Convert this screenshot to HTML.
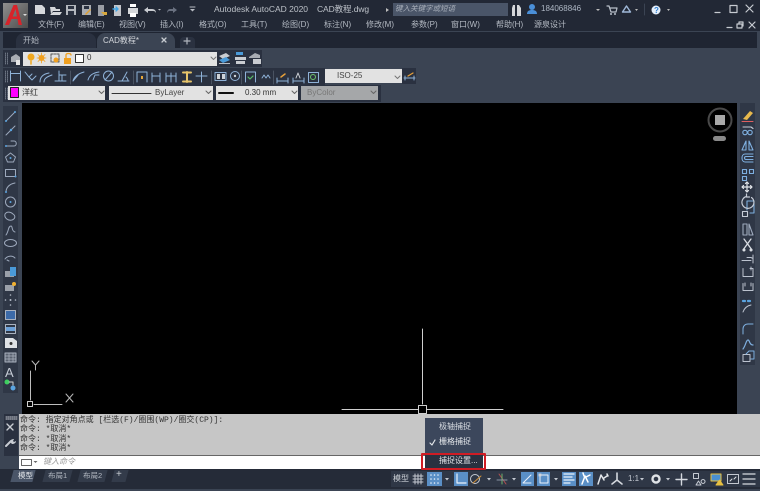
<!DOCTYPE html>
<html><head><meta charset="utf-8"><style>
html,body{margin:0;padding:0;background:#3b4453;width:760px;height:491px;overflow:hidden}
#r{position:relative;width:760px;height:491px;overflow:hidden;font-family:"Liberation Sans","Noto Sans CJK SC",sans-serif;filter:blur(.35px)}
.b{position:absolute}
.t{position:absolute;white-space:nowrap;font-size:8px;line-height:12px;color:#b4bac3}
.c{position:absolute;background:#e2e2e2;color:#444}
.m{font-family:"Liberation Mono","Noto Sans CJK SC",monospace;font-size:8px;color:#333;position:absolute;white-space:nowrap;line-height:10px}
svg{position:absolute;left:0;top:0}
</style></head><body><div id="r">
<div class="b" style="left:0;top:0;width:760px;height:32px;background:#222835"></div>
<div class="b" style="left:0;top:31px;width:760px;height:1px;background:#3b4453"></div>
<div class="b" style="left:3px;top:32px;width:754px;height:16px;background:#1f2532"></div>
<div class="b" style="left:16px;top:33px;width:80px;height:15px;background:#2a3140;border-radius:8px 8px 0 0"></div>
<div class="b" style="left:97px;top:33px;width:78px;height:15px;background:#3b4453;border-radius:8px 8px 0 0"></div>
<div class="b" style="left:180px;top:37px;width:15px;height:11px;background:#2a3140;border-radius:4px 4px 0 0"></div>
<div class="b" style="left:3px;top:3px;width:25px;height:25px;background:linear-gradient(135deg,#8f8f8f,#4c4c4c)"></div>

<div class="b" style="left:3px;top:50px;width:259px;height:17px;background:#2a3140"></div>
<div class="b" style="left:3px;top:68px;width:322px;height:17px;background:#2a3140"></div>
<div class="b" style="left:402px;top:68px;width:14px;height:16px;background:#2a3140"></div>
<div class="b" style="left:3px;top:85px;width:378px;height:17px;background:#2a3140"></div>

<div class="b" style="left:22px;top:103px;width:715px;height:311px;background:#000"></div>
<div class="b" style="left:3px;top:106px;width:15px;height:287px;background:#2f3746"></div>
<div class="b" style="left:740px;top:103px;width:15px;height:262px;background:#2f3746"></div>

<div class="b" style="left:4px;top:414px;width:14px;height:42px;background:#2a3140"></div>
<div class="b" style="left:19px;top:414px;width:741px;height:41px;background:#c6c6c6"></div>
<div class="b" style="left:19px;top:455px;width:741px;height:1px;background:#666"></div>
<div class="b" style="left:19px;top:456px;width:741px;height:13px;background:#fff"></div>
<div class="b" style="left:0;top:469px;width:760px;height:20px;background:#252b38"></div>
<div class="b" style="left:0;top:489px;width:760px;height:2px;background:#3b4453"></div>
<div class="b" style="left:12px;top:470px;width:22px;height:12px;background:#4a5568;transform:skewX(-15deg)"></div>
<div class="b" style="left:44px;top:470px;width:27px;height:12px;background:#333b4a;transform:skewX(-15deg)"></div>
<div class="b" style="left:79px;top:470px;width:27px;height:12px;background:#333b4a;transform:skewX(-15deg)"></div>
<div class="b" style="left:113px;top:470px;width:14px;height:12px;background:#333b4a;transform:skewX(-15deg)"></div>
<div class="b" style="left:391px;top:471px;width:369px;height:16px;background:#2f3746"></div>

<div class="b" style="left:393px;top:3px;width:115px;height:13px;background:#4a5568"></div>

<div class="c" style="left:23px;top:52px;width:194px;height:14px"></div>
<div class="c" style="left:325px;top:69px;width:77px;height:14px"></div>
<div class="c" style="left:8px;top:86px;width:97px;height:14px"></div>
<div class="c" style="left:109px;top:86px;width:104px;height:14px"></div>
<div class="c" style="left:216px;top:86px;width:82px;height:14px"></div>
<div class="c" style="left:301px;top:86px;width:77px;height:14px;background:#a5a7a9"></div>

<div class="b" style="left:427px;top:472px;width:15px;height:14px;background:#5a8fc6"></div>
<div class="b" style="left:454px;top:472px;width:14px;height:14px;background:#5a8fc6"></div>
<div class="b" style="left:521px;top:472px;width:13px;height:14px;background:#5a8fc6"></div>
<div class="b" style="left:537px;top:472px;width:13px;height:14px;background:#5a8fc6"></div>
<div class="b" style="left:562px;top:472px;width:14px;height:14px;background:#5a8fc6"></div>
<div class="b" style="left:579px;top:472px;width:14px;height:14px;background:#5a8fc6"></div>

<svg width="760" height="491" viewBox="0 0 760 491" fill="none" stroke-linecap="round" stroke-linejoin="round">
<!-- logo -->
<path d="M5 25 L13.500 5 H17 L22 25 H18.500 L17.500 19 H11.500 L9 25Z M12.700 16.500 H17 L15.500 9Z" fill="#d8232a" fill-rule="evenodd"/>
<path d="M23 14h4l-2 2z" fill="#ddd"/>
<!-- quick access -->
<g fill="#d5d7da">
<path d="M35 5h7l3 3v6H35z"/>
<path d="M50 7h5l1 2h4v2h-7l-2 3zM53 12h9l-2 3H50z"/>
<path d="M66 5h10v10H66z" fill="#b3b7bd"/><path d="M68 6h6v3h-6zM68 11h6v4h-6z" fill="#2a3140"/>
<path d="M82 5h9v10H82z" fill="#a9adb3"/><path d="M84 6h5v3h-5z" fill="#2a3140"/>
<path d="M98 5h6v11h-6z" fill="#9a9ea5"/>
<path d="M114 5h7v11h-7z" fill="#c3c6cb"/>
<path d="M128 8h10v6h-10z"/><path d="M130 4h6v3h-6zM130 13h6v4h-6z" fill="#fff"/>
</g>
<path d="M85 14l5-5 1 1-5 5z" fill="#e0a030"/>
<path d="M101 12l3 3h3v-3z" fill="#d9a93c"/>
<path d="M113 9h5m-2-2l2 2-2 2" stroke="#3ea4e6" stroke-width="1.400"/>
<path d="M144 10l4-3v2h4c3 0 4 2 4 4-1-2-2-2-4-2h-4v2z" fill="#c9ccd1"/>
<path d="M177 10l-4-3v2h-3c-2 0-3 2-3 4 1-2 2-2 3-2h3v2z" fill="#6a7180"/>
<path d="M158 9h3l-1.500 1.500zM190 9h5l-2.500 2.500z" fill="#b8bcc3"/><path d="M190 7h5" stroke="#b8bcc3"/>
<path d="M386 8v4l3-2z" fill="#bbb"/>
<!-- right title icons -->
<path d="M512 8l1-3h2v11h-3zM517 5h2l2 3v8h-4z" fill="#d5d7da"/>
<circle cx="532" cy="7" r="3" fill="#4a8fd8"/><path d="M527 14c0-3 2-4 5-4s5 1 5 4z" fill="#4a8fd8"/>
<path d="M596 9h4l-2 2z" fill="#bbb"/>
<path d="M607 6h2l2 6h5l1-4h-7" stroke="#b9c0ca" stroke-width="1.200"/><circle cx="611" cy="14" r="1" fill="#b9c0ca"/><circle cx="615" cy="14" r="1" fill="#b9c0ca"/>
<path d="M626.500 6l-4 6h8z" stroke="#9fb8d8" stroke-width="1.400"/>
<path d="M635 9h3l-1.500 2z" fill="#bbb"/>
<path d="M644.500 4v11" stroke="#3b4453"/>
<circle cx="656" cy="10" r="4.500" fill="#e4eefa"/>
<text x="654" y="13" font-family="Liberation Sans" font-size="8" font-weight="700" fill="#2f7fd0">?</text>
<path d="M667 9h3l-1.500 2z" fill="#bbb"/>
<g stroke="#c7cbd1" stroke-width="1.200">
<path d="M715 12.500h5"/><path d="M730 5.500h7v7h-7z"/><path d="M746 5l7 7m0-7l-7 7"/>
<path d="M727 27.500h5"/><path d="M737 24h5v4h-5zM739 24v-2h4v4h-1"/><path d="M749 22l6 6m0-6l-6 6"/>
<path d="M162 38l4 4m0-4l-4 4" stroke-width="1.300"/>
<path d="M184 41h6m-3-3v6" stroke="#b0b5bd"/>
</g>
<!-- toolbar row 1 -->
<path d="M5.500 53v11M7.500 53v11M5.500 71v11M7.500 71v11M5.500 88v11M7.500 88v11" stroke="#6c7482" stroke-width="1" stroke-dasharray="1 1"/>
<path d="M11 57l5-3 4 3v5H11z" fill="#a8acb3"/><path d="M16 60h4v5h-4z" fill="#e6e6e6"/>
<circle cx="31" cy="57" r="3.500" fill="#f0a820"/><path d="M31 61v3" stroke="#f0a820" stroke-width="1.500"/>
<circle cx="41.500" cy="58" r="3" fill="#f0a020"/><path d="M41.500 53v10M37 58h9M38 54.500l7 7m0-7l-7 7" stroke="#f0a020" stroke-width=".8"/>
<path d="M51 54h8v8h-8z" stroke="#555" stroke-dasharray="2 1"/><circle cx="56" cy="60" r="2.500" fill="#f0a020"/>
<path d="M64 58h7v6h-7z" fill="#f0a020"/><path d="M66 58v-3c0-2 5-2 5 0" stroke="#f0a020" stroke-width="1.300"/>
<path d="M75.500 54.500h8v8h-8z" fill="#fff" stroke="#333"/>
<path d="M211 57l2.500 2.500L216 57" stroke="#777"/>
<g fill="#c9ccd1"><path d="M219 56l7-3 4 3-7 3z"/><path d="M219 60l7-3 4 3-7 3z" fill="#4a9ad8"/><path d="M219 63h11v1h-11z" fill="#b8bcc3"/>
<path d="M235 57h11v3h-11zM236 61h9v3h-9z"/><path d="M236 52h7v3h-7z" fill="#4a9ad8"/>
<path d="M249 57l6-4 5 2v3h-11z" fill="#a8acb3"/><path d="M253 59h8v5h-8z"/></g>
<!-- dim toolbar -->
<g stroke="#8fb2d8" stroke-width="1">
<path d="M10.500 71v10M20.500 71v10M10.500 73.500h10"/>
<path d="M25 72l4 5 3 3 4-4M29 77l3-3"/>
<path d="M40 82c0-5 3-8 9-9M44 82c0-3 2-5 8-7"/>
<path d="M55 81h11M59 71v10M59 75h7M62 75v6"/>
<path d="M73 81c1-4 4-7 11-9M73 81l5-6"/>
<path d="M88 80c1-4 4-7 11-8M93 80l2-5 4 0"/>
<circle cx="108.500" cy="76" r="5"/><path d="M105 80l7-8"/>
<path d="M118 81h11M122 81l5-9M126 77c1 1 2 3 2 4"/>
<path d="M137 72v10M147 72v10M137 72h10"/>
<path d="M152 73v9M160 73v9M152 76h8"/>
<path d="M166 73v9M171 73v9M176 73v9M166 76h10"/>
<path d="M196 76h11M201.500 72v10"/>
<path d="M215 72.500h11v8h-11z"/>
<circle cx="235" cy="76" r="4.500"/>
<path d="M245.500 72v10M255.500 72v10M245.500 72h10"/>
<path d="M262 78l2-3 2 3 2-3 2 3"/>
<path d="M277 81h11M277 78v5M288 78v5"/>
<path d="M293 81h11M293 78v5M304 78v5"/>
<path d="M308.500 72.500h10v10h-10z"/>
<path d="M404 78h11M405 76v4M414 76v4"/>
</g>
<path d="M70.500 71v13M133.500 71v13M211.500 71v13M241.500 71v13M273.500 71v13" stroke="#4a5362"/>
<path d="M183 72.500h8M183 81.500h8M187 72v10" stroke="#e6c46a" stroke-width="2"/>
<path d="M141 76h2v3h-2z" fill="#e6a83a"/>
<path d="M217 74h3v5h-3zM222 74h3v5h-3z" fill="#cfd3d8"/>
<circle cx="235" cy="76" r="1.200" fill="#cfd3d8"/>
<path d="M248 77l2 2 3-3" stroke="#5bbf6a" stroke-width="1.200"/>
<path d="M281 77l4-3" stroke="#e6a03a" stroke-width="1.500"/>
<path d="M296 78l2-5 2 5" stroke="#cfd3d8"/>
<circle cx="313" cy="77" r="2.500" stroke="#6cc26c"/>
<path d="M408 76l5-3" stroke="#e6a03a" stroke-width="1.300"/>
<path d="M395 76l2.500 2.500L400 76" stroke="#777"/>
<!-- row3 -->
<rect x="10.500" y="87.500" width="8" height="10" fill="#ff00ff" stroke="#222"/>
<path d="M99 91l2.500 2.500L104 91M206 91l2.500 2.500L211 91M292 91l2.500 2.500L297 91M371 91l2.500 2.500L376 91" stroke="#666"/>
<path d="M112 93.500h39" stroke="#333"/>
<path d="M219 93h14" stroke="#111" stroke-width="2"/>
<!-- left toolbar icons -->
<g stroke="#9da9bc" stroke-width="1">
<path d="M6 121l9-9"/><path d="M6 135l9-9"/><path d="M6 146h8c3 0 3-5 0-5h-3"/>
<path d="M10.500 153l5 4-2 5H7.500l-2-5z"/><path d="M5.500 169.500h10v7h-10z"/>
<path d="M6 192c0-4 3-8 9-9"/><circle cx="10.500" cy="202" r="5"/>
<path d="M5 214c2-3 6-2 8 0 3 2 2 5-1 6-4 1-8-2-7-6z"/>
<path d="M6 235c3-4 2-9 5-9 2 0 0 5 4 6"/>
<ellipse cx="10.500" cy="243" rx="6" ry="3.500"/>
<path d="M5 259c2-3 7-4 10-1M7 260l2 1"/>
</g>
<g fill="#5ba4e0"><circle cx="6" cy="121" r="1"/><circle cx="15" cy="112" r="1"/><circle cx="11" cy="130" r="1.200"/><circle cx="6" cy="146" r="1"/><circle cx="10.500" cy="158" r="1"/><circle cx="15.500" cy="176.500" r="1"/><circle cx="6" cy="192" r="1"/><circle cx="10.500" cy="202" r="1"/></g>
<path d="M5 271h9v6H5z" fill="#9aa0a9"/><path d="M10 267h6v9h-6z" fill="#4a9ad8"/>
<path d="M5 285h9v6H5z" fill="#9aa0a9"/><circle cx="14" cy="284" r="2" fill="#f0b030"/>
<circle cx="10.500" cy="300" r="1" fill="#b5bdc9"/><circle cx="5.500" cy="300" r=".8" fill="#b5bdc9"/><circle cx="15.500" cy="300" r=".8" fill="#b5bdc9"/><circle cx="10.500" cy="295" r=".8" fill="#b5bdc9"/><circle cx="10.500" cy="305" r=".8" fill="#b5bdc9"/>
<path d="M5.500 310.500h10v9h-10z" fill="#3c6aa8" stroke="#aab2bf"/><path d="M5.500 324.500h10v9h-10z" stroke="#aab2bf"/><path d="M6 327h9v4H6z" fill="#6da1d8"/>
<path d="M5 338h8l4 3v7H5z" fill="#dfe2e6"/><circle cx="11" cy="343.500" r="1.500" fill="#333"/>
<path d="M5 353h11v9H5z" stroke="#aab2bf" fill="#5a6270"/><path d="M5 356h11M5 359h11M9 353v9M13 353v9" stroke="#aab2bf" stroke-width=".7"/>
<circle cx="7" cy="382" r="2.500" fill="#3ecf60"/><circle cx="13" cy="388" r="2.500" fill="#5ba4e0"/><path d="M9 382h4v3" stroke="#ccc"/>
<!-- right toolbar icons -->
<path d="M743 119l7-8 3 2-6 7z" fill="#e7b84c"/><path d="M742 121.500h11" stroke="#e06060"/>
<g stroke="#7fb0e0" stroke-width="1.100">
<circle cx="745" cy="132.500" r="2.200"/><circle cx="750" cy="132.500" r="2.200"/><path d="M743 127h8l2 1.500" stroke="#c6ccd6"/>
<path d="M746 150v-9l-4 9zM749 150v-9l4 9z"/>
<path d="M753 154h-8c-4 0-4 8 0 8h8M753 156.500h-7c-2 0-2 3 0 3h7"/>
<path d="M742.500 169.500h4v4h-4zM749.500 169.500h4v4h-4zM742.500 176.500h4v4h-4z"/>
<path d="M747 210v-9h7v12h-4"/><path d="M742.500 213.500h5v5h-5z" stroke="#c6ccd6" transform="translate(0,-2)"/>
<path d="M743 224h4v11h-4zM749 224l4 11h-4z" stroke="#9da9bc"/>
</g>
<path d="M747 182v10M742 187h10M745.500 183.500l1.500-1.500 1.500 1.500M745.500 190.500l1.500 1.500 1.500-1.500M743.500 185.500l-1.500 1.500 1.500 1.500M750.500 185.500l1.500 1.500-1.500 1.500" stroke="#e2e5e9" stroke-width="1.200"/>
<path d="M751.500 197.500a6 6 0 1 1-5-1M746.500 194v3h3" stroke="#c6ccd6" stroke-width="1.200"/>
<path d="M744 239l8 11M751 239l-8 11" stroke="#d8dce2" stroke-width="1.300"/><circle cx="744" cy="250" r="1.500" fill="#d8dce2"/><circle cx="751" cy="250" r="1.500" fill="#d8dce2"/>
<g stroke="#bcc3cf" stroke-width="1">
<path d="M742 260.500h9M747 257.500h4l2 1M753 255v8"/>
<path d="M743 268.500v8h10v-8h-3M751 267v3"/>
<path d="M743 283.500v7h10v-7M745 283v3M751 283v3"/>
<path d="M743 312c1-3 3-6 8-7"/>
<path d="M743 334v-5c0-3 2-5 5-5h5" stroke="#7fb0e0"/>
<path d="M743 349c3-4 3-9 5-9s1 5 5 5" stroke="#7fb0e0" stroke-width="1.200"/>
<path d="M743 354.500h7v7h-7z"/><path d="M746 354l3-3h5v8h-3" stroke="#7fb0e0"/>
</g>
<path d="M743 301h2m3 0h2" stroke="#5ba4e0" stroke-width="2.200"/>
<!-- viewcube -->
<circle cx="720" cy="120" r="11.500" stroke="#4a4a4a" stroke-width="2"/>
<rect x="715" y="115" width="10" height="10" fill="#a9a9a9"/>
<rect x="713" y="136" width="13" height="5" rx="2.500" fill="#8a8a8a"/>
<!-- crosshair & UCS -->
<path d="M422.500 329v75M342 409.500h76M427 409.500h76" stroke="#cfcfcf"/>
<rect x="418.500" y="405.500" width="8" height="8" stroke="#cfcfcf"/>
<path d="M30.500 371v29M34 404.500h28" stroke="#bdbdbd"/>
<rect x="27.500" y="401.500" width="5" height="5" stroke="#d0d0d0"/>
<path d="M32 361l3.500 4v5M39 361l-3.500 4M66 394l7 8M73 394l-7 8" stroke="#b5b5b5"/>
<!-- cmd icons -->
<path d="M6 417h11M6 419h11" stroke="#c8ccd2" stroke-dasharray="1 1" stroke-width="1"/>
<path d="M7 424l6 6m0-6l-6 6" stroke="#c8ccd2" stroke-width="1.400"/>
<path d="M6 446l5-5" stroke="#c8ccd2" stroke-width="2"/><path d="M10 442c0-2 2-3 4-3l-1 2 1 1 2-1c0 2-2 3-4 3z" fill="#c8ccd2"/>
<rect x="21.500" y="459.500" width="10" height="6" fill="#fff" stroke="#666"/><path d="M33.500 461h4l-2 2z" fill="#666"/>
<!-- status icons -->
<g stroke="#c4c9d1" stroke-width="1">
<path d="M413 476h10M413 479h10M413 482h10M415 474v10M418 474v10M421 474v10"/>
<path d="M457 474v9h9" stroke="#eaf2fb" stroke-width="1.200"/>
<circle cx="475" cy="479" r="4.500"/><path d="M473 483l8-7" stroke="#d0913a"/>
<path d="M499 474l7 10" stroke="#b35050"/><path d="M502 474v10" stroke="#6cb26c"/><path d="M497 480h10" stroke="#8a93a1"/>
<path d="M523 483l8-8M523 483h8" stroke="#eaf2fb"/>
<path d="M540 475h8v8h-8z" stroke="#eaf2fb"/><path d="M539 474h2v2h-2z" fill="#eaf2fb"/>
<path d="M564 474h10M564 477h8M564 480h10M564 483h6" stroke="#eaf2fb" stroke-width="1.300"/>
<path d="M582 484l3-8 3 6M584 476l-1-3M586 477l4-2" stroke="#fff" stroke-width="1.500"/>
<path d="M598 484l3-9 3 5M604 478l3-2M607 474l1 2" stroke="#e3e6ea" stroke-width="1.500"/>
<path d="M612 484l5-4v-7m0 7l5 4" stroke="#d4d8de" stroke-width="1.600"/>
<circle cx="656" cy="479" r="3.500" stroke-width="2.400" stroke="#dfe2e6"/>
<path d="M676 479.500h11M681.500 474v11" stroke="#d4d8de" stroke-width="1.400"/>
<path d="M693.500 473.500h5v5h-5zM703 479.500a2 2 0 1 0 .1 0zM698.500 481l-2.500 4h5z"/>
<path d="M711 474h10v7h-10z" fill="#4a90d0" stroke="#e8c040"/>
<path d="M716 485l3.500-5 3.500 5z" fill="#e8c040" stroke="#e8c040"/>
<path d="M727.500 474.500h11v9h-11z"/><path d="M730 481l2-2M736 477l-2 2" stroke="#dfe2e6"/>
<path d="M743 474h12M743 479h12M743 484h12" stroke="#d6dae0" stroke-width="1.300"/>
</g>
<g fill="#eaf2fb"><circle cx="431" cy="475" r=".8"/><circle cx="434.500" cy="475" r=".8"/><circle cx="438" cy="475" r=".8"/><circle cx="431" cy="479" r=".8"/><circle cx="434.500" cy="479" r=".8"/><circle cx="438" cy="479" r=".8"/><circle cx="431" cy="483" r=".8"/><circle cx="434.500" cy="483" r=".8"/><circle cx="438" cy="483" r=".8"/></g>
<path d="M445 478h4l-2 2.500zM487 478h4l-2 2.500zM512 478h4l-2 2.500zM554 478h4l-2 2.500zM640 478h4l-2 2.500zM666 478h4l-2 2.500z" fill="#c4c9d1"/>
<!-- popup -->
<rect x="425" y="418" width="58" height="36" fill="#3c475c"/>
<rect x="425" y="454" width="58" height="14" fill="#2a3140"/>
<path d="M430 443l2 2 3-5" stroke="#e3e6ea" stroke-width="1.200"/>
<rect x="422" y="454" width="63" height="15" stroke="#d01c24" stroke-width="2"/>
</svg>

<span class="t" style="left:214px;top:3px;font-size:8.500px;color:#bcc1c8">Autodesk AutoCAD 2020</span>
<span class="t" style="left:317px;top:3px;font-size:8.500px;letter-spacing:-.1px;color:#bcc1c8">CAD教程.dwg</span>
<span class="t" style="left:395px;top:3px;font-size:7.500px;font-style:italic;color:#a8afba">键入关键字或短语</span>
<span class="t" style="left:541px;top:3px;font-size:8px;color:#aeb7c4">184068846</span>
<span class="t" style="left:38px;top:19px">文件(F)</span>
<span class="t" style="left:78px;top:19px">编辑(E)</span>
<span class="t" style="left:119px;top:19px">视图(V)</span>
<span class="t" style="left:160px;top:19px">插入(I)</span>
<span class="t" style="left:199px;top:19px">格式(O)</span>
<span class="t" style="left:241px;top:19px">工具(T)</span>
<span class="t" style="left:282px;top:19px">绘图(D)</span>
<span class="t" style="left:324px;top:19px">标注(N)</span>
<span class="t" style="left:366px;top:19px">修改(M)</span>
<span class="t" style="left:411px;top:19px">参数(P)</span>
<span class="t" style="left:451px;top:19px">窗口(W)</span>
<span class="t" style="left:496px;top:19px">帮助(H)</span>
<span class="t" style="left:534px;top:19px">源泉设计</span>
<span class="t" style="left:23px;top:35px">开始</span>
<span class="t" style="left:103px;top:35px;color:#d4d7dc">CAD教程*</span>
<span class="t" style="left:87px;top:52px;color:#333">0</span>
<span class="t" style="left:337px;top:70px;color:#444">ISO-25</span>
<span class="t" style="left:22px;top:87px;color:#333">洋红</span>
<span class="t" style="left:155px;top:87px;color:#444">ByLayer</span>
<span class="t" style="left:245px;top:87px;color:#333">0.30 mm</span>
<span class="t" style="left:307px;top:87px;color:#777">ByColor</span>
<span class="t" style="left:5px;top:366px;font-size:13px;line-height:14px;color:#c6ccd6">A</span>
<span class="m" style="left:20px;top:416px">命令: 指定对角点或 [栏选(F)/圈围(WP)/圈交(CP)]:</span>
<span class="m" style="left:20px;top:425px">命令: *取消*</span>
<span class="m" style="left:20px;top:435px">命令: *取消*</span>
<span class="m" style="left:20px;top:444px">命令: *取消*</span>
<span class="t" style="left:43px;top:456px;font-style:italic;color:#9a9a9a">键入命令</span>
<span class="t" style="left:18px;top:470px;font-size:7.500px;color:#e3e6ea">模型</span>
<span class="t" style="left:48px;top:470px;font-size:7.500px">布局1</span>
<span class="t" style="left:83px;top:470px;font-size:7.500px">布局2</span>
<span class="t" style="left:116px;top:469px;font-size:10px;color:#c8ccd2">+</span>
<span class="t" style="left:393px;top:473px;color:#cdd1d7">模型</span>
<span class="t" style="left:628px;top:473px;color:#c4c9d1">1:1</span>
<span class="t" style="left:439px;top:421px;color:#d8dce2">极轴捕捉</span>
<span class="t" style="left:439px;top:436px;color:#e3e6ea">栅格捕捉</span>
<span class="t" style="left:439px;top:455px;color:#e3e6ea">捕捉设置...</span>
</div></body></html>
